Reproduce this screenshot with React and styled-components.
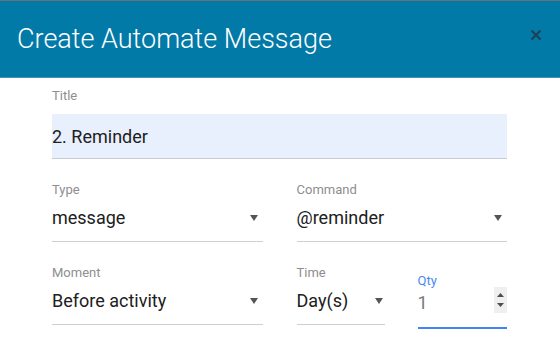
import React from "react";
import styled, { createGlobalStyle } from "styled-components";

const Global = createGlobalStyle`
  html, body { margin: 0; padding: 0; background: #ffffff; }
  body { font-family: Roboto, "Noto Sans", Arial, sans-serif; }
  * { box-sizing: border-box; }
`;

const Dialog = styled.div`
  width: 560px;
  height: 346px;
  background: #fff;
  overflow: hidden;
`;

const Header = styled.header`
  height: 78px;
  background: #027aa8;
  border-top: 1px solid #6b7276;
  border-bottom: 1px solid #3f96b8;
  display: flex;
  align-items: center;
  justify-content: space-between;
  padding: 0 18px 0 17px;
`;

const HeaderTitle = styled.h1`
  margin: 0;
  font-family: Roboto, sans-serif;
  font-weight: 300;
  font-size: 27px;
  color: #ffffff;
  letter-spacing: 0;
`;

const CloseBtn = styled.button`
  border: 0;
  background: transparent;
  padding: 0;
  width: 13px;
  height: 13px;
  display: flex;
  align-items: center;
  justify-content: center;
  margin-top: -9px;
  cursor: pointer;
`;

const Body = styled.div`
  padding: 10px 53px 0 52px;
  display: flex;
  flex-direction: column;
  gap: 23px;
`;

const Row = styled.div`
  display: grid;
  grid-template-columns: 1fr 1fr;
  column-gap: 34px;
`;

const SubRow = styled.div`
  display: grid;
  grid-template-columns: 88px 89px;
  column-gap: 33px;
`;

const Field = styled.div`
  display: flex;
  flex-direction: column;
  padding-top: ${(p) => p.$offset || 0}px;
`;

const Label = styled.label`
  font-size: 13px;
  line-height: 16px;
  height: 16px;
  color: ${(p) => (p.$active ? "#4a8af4" : "#8e8e8e")};
`;

const FilledInput = styled.div`
  margin-top: 10px;
  height: 45px;
  background: #e8f0fe;
  border-bottom: 1px solid #c9ccd2;
  display: flex;
  align-items: center;
  font-size: 18px;
  color: #202020;
  padding-top: 1px;
`;

const SelectBox = styled.div`
  margin-top: ${(p) => (p.$active ? 2 : 8)}px;
  height: ${(p) => (p.$active ? 38 : 36)}px;
  display: flex;
  align-items: flex-start;
  justify-content: space-between;
  border-bottom: ${(p) => (p.$active ? "2px solid #4285f4" : "1px solid #cfcfcf")};
  font-size: 18px;
  line-height: 24px;
  color: ${(p) => (p.$muted ? "#7a7a7a" : "#202020")};
  padding-right: ${(p) => p.$pad}px;
`;

const Arrow = styled.svg`
  margin-top: 9px;
  flex: none;
`;

const Spinner = styled.div`
  margin-top: -4px;
  width: 13px;
  height: 26px;
  background: #efefef;
  display: flex;
  flex-direction: column;
  align-items: center;
  justify-content: center;
  gap: 6px;
`;

const Caret = ({ up }) => (
  <svg width="7" height="4" viewBox="0 0 7 4">
    <path d={up ? "M0 4 L3.5 0 L7 4 Z" : "M0 0 L3.5 4 L7 0 Z"} fill="#4d4d4d" />
  </svg>
);

const Select = ({ label, value, pad = 5 }) => (
  <Field>
    <Label>{label}</Label>
    <SelectBox $pad={pad}>
      <span>{value}</span>
      <Arrow width="8" height="6" viewBox="0 0 8 6">
        <path d="M0 0 L8 0 L4 6 Z" fill="#555" />
      </Arrow>
    </SelectBox>
  </Field>
);

export default function App() {
  return (
    <>
      <Global />
      <Dialog>
        <Header>
          <HeaderTitle>Create Automate Message</HeaderTitle>
          <CloseBtn aria-label="close">
            <svg width="12" height="12" viewBox="0 0 12 12">
              <path d="M1.5 1.5 L10.5 10.5 M10.5 1.5 L1.5 10.5" stroke="#1c4255" strokeWidth="2.2" />
            </svg>
          </CloseBtn>
        </Header>
        <Body>
          <Field>
            <Label>Title</Label>
            <FilledInput>2. Reminder</FilledInput>
          </Field>
          <Row>
            <Select label="Type" value="message" />
            <Select label="Command" value="@reminder" />
          </Row>
          <Row>
            <Select label="Moment" value="Before activity" />
            <SubRow>
              <Select label="Time" value="Day(s)" pad={2} />
              <Field $offset={8}>
                <Label $active>Qty</Label>
                <SelectBox $active $muted $pad={0}>
                  <span>1</span>
                  <Spinner>
                    <Caret up />
                    <Caret />
                  </Spinner>
                </SelectBox>
              </Field>
            </SubRow>
          </Row>
        </Body>
      </Dialog>
    </>
  );
}
